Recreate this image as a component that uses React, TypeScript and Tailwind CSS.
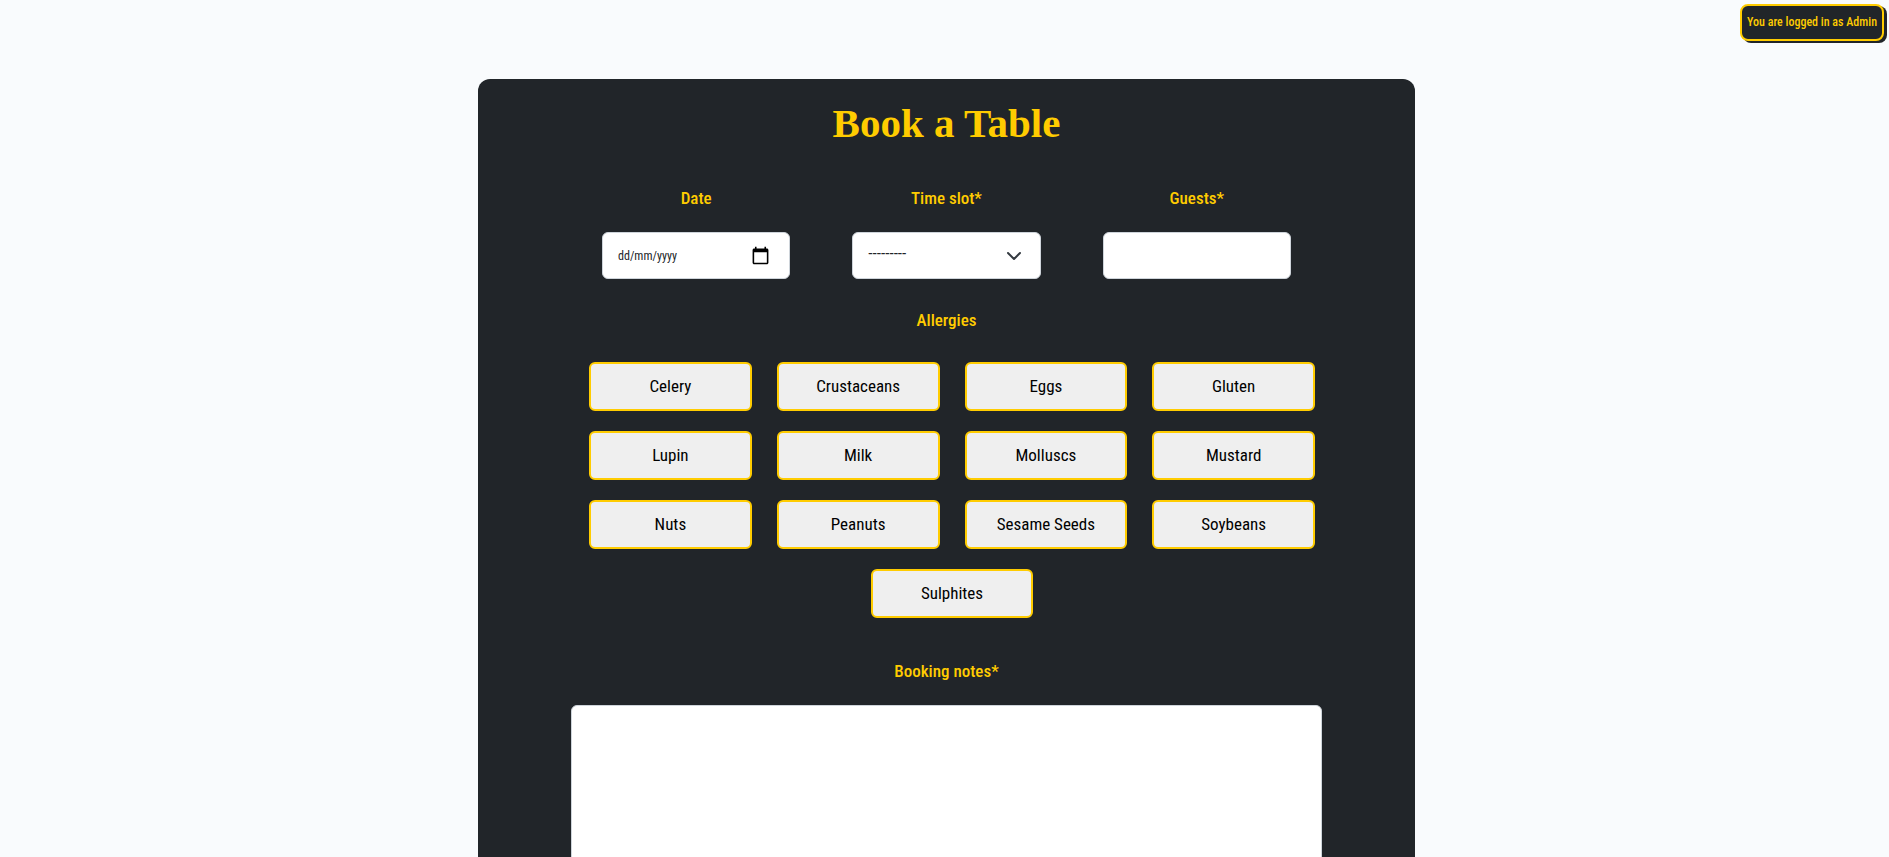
import { useState, type ReactNode } from 'react';

const ALLERGIES = [
  'Celery',
  'Crustaceans',
  'Eggs',
  'Gluten',
  'Lupin',
  'Milk',
  'Molluscs',
  'Mustard',
  'Nuts',
  'Peanuts',
  'Sesame Seeds',
  'Soybeans',
  'Sulphites',
];

const LABEL = 'block text-center text-[17px] leading-9 font-medium text-[#ffcc00]';
const FIELD =
  'h-[47px] w-full rounded-md border border-[#ced4da] bg-white px-[15px] text-[#212529]';

function Field({ id, label, children }: { id: string; label: string; children: ReactNode }) {
  return (
    <div className="flex-1 px-[31px]">
      <label htmlFor={id} className={`${LABEL} mb-4`}>
        {label}
      </label>
      <div className="relative">{children}</div>
    </div>
  );
}

function CalendarIcon() {
  return (
    <svg viewBox="0 0 24 24" className="h-[19px] w-[19px]" fill="#000" aria-hidden="true">
      <path d="M20 3h-1V1h-2v2H7V1H5v2H4c-1.1 0-2 .9-2 2v16c0 1.1.9 2 2 2h16c1.1 0 2-.9 2-2V5c0-1.1-.9-2-2-2zm0 18H4V8h16v13z" />
    </svg>
  );
}

export default function App() {
  const [selected, setSelected] = useState<string[]>([]);

  const toggle = (name: string) =>
    setSelected((list) => (list.includes(name) ? list.filter((n) => n !== name) : [...list, name]));

  return (
    <div className="relative min-h-screen overflow-x-hidden bg-[#f9fbfd] pt-[79px] pl-1 font-['Roboto_Condensed','Open_Sans_Condensed',sans-serif]">
      <p className="absolute top-1 right-[5px] rounded-lg border-2 border-[#ffcc00] bg-[#212529] px-[5px] text-xs leading-[33px] font-medium text-[#ffcc00] shadow-[3px_2px_0_#212529]">
        You are logged in as Admin
      </p>

      <main className="mx-auto w-full max-w-[937px] rounded-t-xl bg-[#212529] px-[93px] pt-5">
        <h1 className="text-center font-['Liberation_Serif',serif] text-[41px] leading-[48px] font-bold text-[#ffcc00]">
          Book a Table
        </h1>

        <form className="mt-[33px]" onSubmit={(e) => e.preventDefault()}>
          <div className="flex">
            <Field id="date" label="Date">
              <input
                id="date"
                type="text"
                placeholder="dd/mm/yyyy"
                className={`${FIELD} text-xs placeholder:text-[#212529] placeholder:opacity-100`}
              />
              <button
                type="button"
                aria-label="Open calendar"
                className="absolute inset-y-0 right-5 flex items-center"
              >
                <CalendarIcon />
              </button>
            </Field>
            <Field id="slot" label="Time slot*">
              <select id="slot" className={`${FIELD} appearance-none pb-1 text-[17px]`}>
                <option>---------</option>
              </select>
              <svg
                viewBox="0 0 16 16"
                className="pointer-events-none absolute inset-y-0 right-[19px] my-auto h-4 w-4"
                fill="none"
                stroke="#343a40"
                strokeWidth="2"
                strokeLinecap="round"
                strokeLinejoin="round"
                aria-hidden="true"
              >
                <path d="m2 5 6 6 6-6" />
              </svg>
            </Field>
            <Field id="guests" label="Guests*">
              <input id="guests" type="text" inputMode="numeric" className={FIELD} />
            </Field>
          </div>

          <h2 className={`${LABEL} mt-[23px] mb-6`}>Allergies</h2>
          <ul className="-mr-1.5 ml-1.5 flex flex-wrap justify-center">
            {ALLERGIES.map((name) => (
              <li key={name} className="w-1/4 pr-[13px] pb-5 pl-3">
                <button
                  type="button"
                  aria-pressed={selected.includes(name)}
                  onClick={() => toggle(name)}
                  className="h-[49px] w-full rounded-md border-2 border-[#ffcc00] bg-[#efefef] text-[17px] text-black aria-pressed:bg-[#ffcc00]"
                >
                  {name}
                </button>
              </li>
            ))}
          </ul>

          <label htmlFor="notes" className={`${LABEL} mt-[15px] mb-4`}>
            Booking notes*
          </label>
          <textarea
            id="notes"
            rows={10}
            className="block w-full resize-none rounded-md border border-[#ced4da] bg-white p-3 text-base text-[#212529]"
          />
        </form>
      </main>
    </div>
  );
}
